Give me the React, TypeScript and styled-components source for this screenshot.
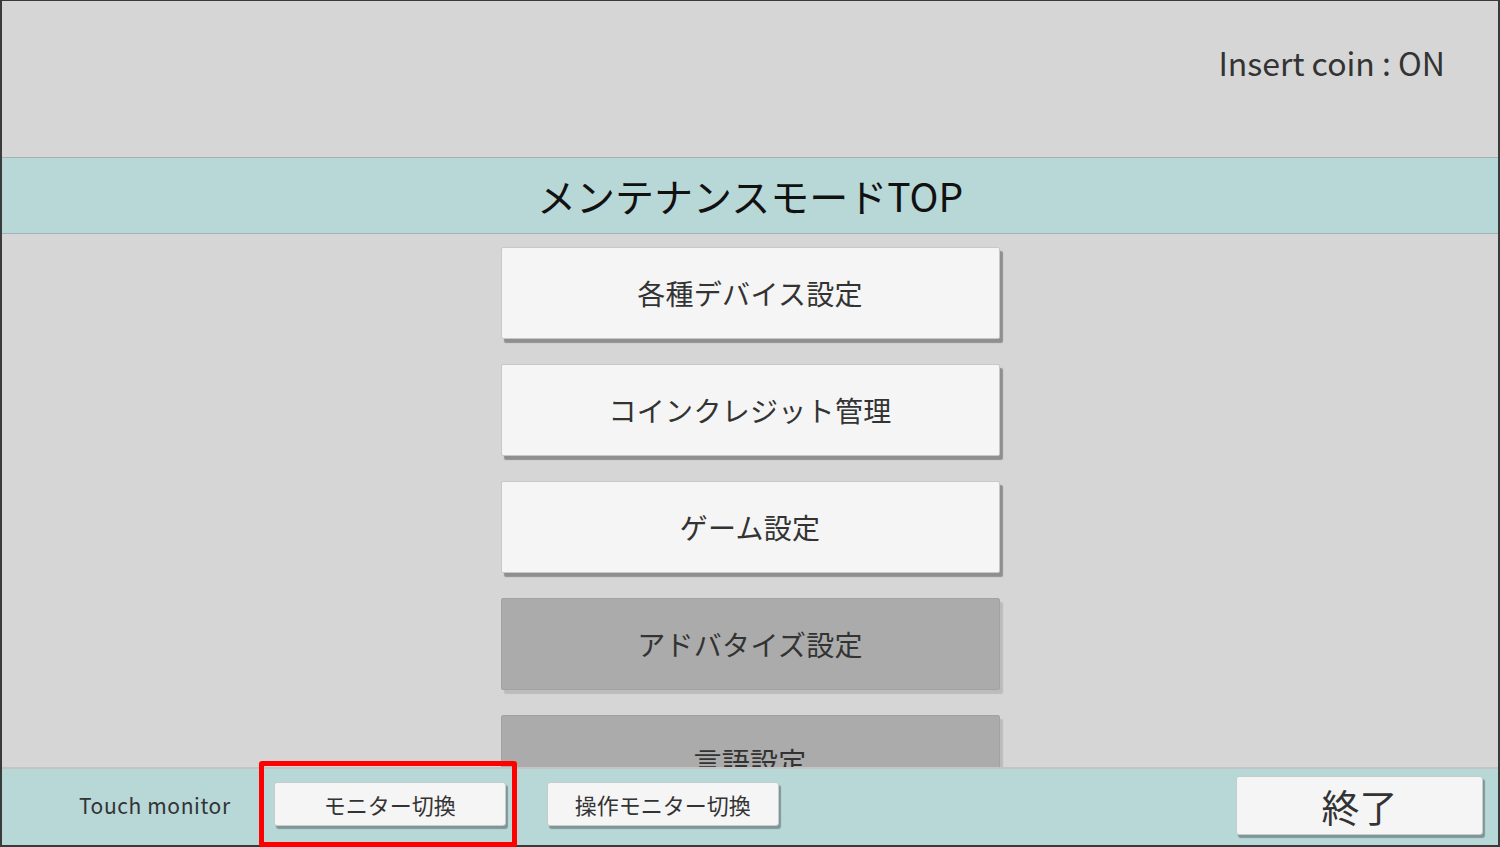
import React from 'react';
import styled, { createGlobalStyle } from 'styled-components';

const GlobalStyle = createGlobalStyle`
  html, body {
    margin: 0;
    padding: 0;
    background: #d6d6d6;
  }
  * { box-sizing: border-box; }
`;

const Screen = styled.div`
  position: relative;
  width: 1500px;
  height: 847px;
  display: flex;
  flex-direction: column;
  background: #d6d6d6;
  border: 2px solid #3a3a3a;
  border-top-width: 1px;
  font-family: "Noto Sans CJK JP", "Noto Sans", sans-serif;
  color: #333;
`;

const Header = styled.div`
  height: 156px;
  flex: none;
  display: flex;
  justify-content: flex-end;
  align-items: flex-start;
  padding: 38px 53px 0 0;
  font-size: 32px;
  line-height: 46px;
  color: #333;
`;

const TitleBar = styled.div`
  height: 77px;
  flex: none;
  display: flex;
  align-items: center;
  justify-content: center;
  background: #b8d7d7;
  border-top: 1px solid #a3b3b3;
  border-bottom: 1px solid #a3b3b3;
  font-size: 39px;
  color: #111;
  padding-bottom: 2px;
`;

const MenuArea = styled.div`
  flex: 1;
  min-height: 0;
  overflow: hidden;
  display: flex;
  flex-direction: column;
  align-items: center;
  gap: 25px;
  padding-top: 13px;
`;

const MenuButton = styled.div<{ $disabled?: boolean }>`
  flex: none;
  width: 499px;
  height: 92px;
  display: flex;
  align-items: center;
  justify-content: center;
  font-size: 28px;
  letter-spacing: 0.3px;
  color: #333;
  border-radius: 2px;
  background: ${(p) => (p.$disabled ? '#ababab' : '#f5f5f5')};
  border: 1px solid ${(p) => (p.$disabled ? '#a2a2a2' : '#c8c8c8')};
  box-shadow: ${(p) =>
    p.$disabled ? '3px 4px 1px rgba(0,0,0,0.12)' : '3px 4px 1px rgba(0,0,0,0.33)'};
`;

const BottomBar = styled.div`
  height: 78px;
  flex: none;
  display: flex;
  align-items: center;
  background: #b8d7d7;
  border-top: 2px solid #c4c4c4;
  padding: 0 15px 6px 77px;
`;

const Label = styled.span`
  font-size: 21px;
  letter-spacing: 0.6px;
  color: #333;
  margin-right: 43px;
  padding-top: 2px;
`;

const BarButton = styled.div<{ $wide?: boolean }>`
  flex: none;
  width: ${(p) => (p.$wide ? '247px' : '232px')};
  height: ${(p) => (p.$wide ? '59px' : '44px')};
  display: flex;
  align-items: center;
  justify-content: center;
  font-size: ${(p) => (p.$wide ? '38px' : '22px')};
  color: #333;
  background: #f5f5f5;
  border: 1px solid #c4cccc;
  border-radius: 3px;
  box-shadow: 2px 3px 1px rgba(0,0,0,0.3);
  margin-right: 41px;
  ${(p) => (p.$wide ? 'margin: 2px 0 0 auto;' : '')}
`;

const Highlight = styled.div`
  position: absolute;
  left: 257px;
  top: 760px;
  width: 258px;
  height: 86px;
  border: 5px solid #ff0000;
  border-radius: 3px;
  pointer-events: none;
`;

const menus = [
  { label: '各種デバイス設定' },
  { label: 'コインクレジット管理' },
  { label: 'ゲーム設定' },
  { label: 'アドバタイズ設定', disabled: true },
  { label: '言語設定', disabled: true },
];

export default function App() {
  return (
    <>
      <GlobalStyle />
      <Screen>
        <Header>Insert coin : ON</Header>
        <TitleBar>メンテナンスモードTOP</TitleBar>
        <MenuArea>
          {menus.map((m) => (
            <MenuButton key={m.label} $disabled={m.disabled}>
              {m.label}
            </MenuButton>
          ))}
        </MenuArea>
        <BottomBar>
          <Label>Touch monitor</Label>
          <BarButton>モニター切換</BarButton>
          <BarButton>操作モニター切換</BarButton>
          <BarButton $wide>終了</BarButton>
        </BottomBar>
        <Highlight />
      </Screen>
    </>
  );
}
